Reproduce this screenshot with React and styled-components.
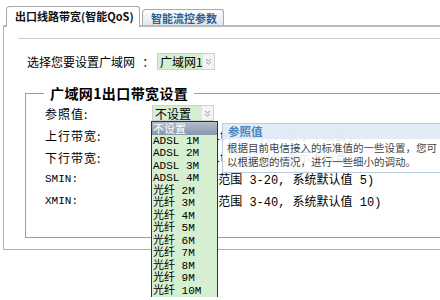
import React from "react";
import styled, { createGlobalStyle, css } from "styled-components";

const GlobalStyle = createGlobalStyle`
  body {
    margin: 0;
    background: #fff;
    overflow: hidden;
    font-family: "Liberation Mono", "Noto Sans CJK SC", monospace;
    font-size: 12px;
    color: #000;
  }
`;

const Page = styled.div`
  width: 480px;
  height: 300px;
  position: relative;
`;

const TabRow = styled.div`
  display: flex;
  align-items: flex-end;
  gap: 2px;
  height: 25px;
  padding-left: 6px;
  position: relative;
  z-index: 2;
`;

const Tab = styled.div`
  display: flex;
  align-items: center;
  box-sizing: border-box;
  border: 1px solid #a9a9a9;
  border-bottom: none;
  border-radius: 4px 3px 0 0;
  font-family: "Noto Sans CJK SC", sans-serif;
  font-weight: bold;
  font-size: 11px;
  white-space: nowrap;
  ${(p) =>
    p.$active
      ? css`
          width: 134px;
          height: 21px;
          margin-bottom: -2px;
          padding: 0 0 2px 8px;
          background: #fff;
          color: #111;
        `
      : css`
          width: 82px;
          height: 16px;
          padding-left: 8px;
          background: linear-gradient(#fbfcfd, #e3e8ee);
          color: #2f5f8f;
        `}
`;

const Panel = styled.div`
  margin-left: 3px;
  border-top: 2px solid #b9b9b9;
  border-left: 1px solid #b0b0b0;
  border-bottom: 1px solid #b0b0b0;
  padding-bottom: 11px;
`;

const Rule = styled.div`
  margin: 11px 0 0 14px;
  border-top: 1px solid #cfcfcf;
`;

const WanRow = styled.div`
  display: flex;
  align-items: center;
  height: 17px;
  margin-top: 14px;
  padding-left: 23px;
`;

const WanLabel = styled.span`
  width: 130px;
`;

const SelectBox = styled.div`
  display: flex;
  box-sizing: border-box;
  width: ${(p) => p.$w}px;
  height: ${(p) => p.$h}px;
  border: 1px solid #d0d0d0;
  background: #fff;
`;

const SelectText = styled.span`
  flex: 1;
  display: flex;
  align-items: center;
  padding-left: 2px;
  overflow: hidden;
  background: #d6efd0;
  font-family: "Noto Sans CJK SC", sans-serif;
  font-size: 12px;
  white-space: nowrap;
`;

const SelectArrow = styled.span`
  width: 11px;
  flex: none;
  display: flex;
  align-items: center;
  justify-content: center;
  background: #f4f4f4;
`;

const Fieldset = styled.fieldset`
  margin: 14px 0 0 21px;
  padding: 0 0 25px 19px;
  border: 1px solid #9e9e9e;
  border-right: none;
`;

const Legend = styled.legend`
  margin-left: -1px;
  padding: 0 6px;
  font-family: "Noto Sans CJK SC", sans-serif;
  font-weight: bold;
  font-size: 14px;
  line-height: 18px;
  letter-spacing: 0.4px;
`;

const FormRow = styled.div`
  display: flex;
  align-items: center;
  height: 22px;
  position: relative;
`;

const RowLabel = styled.span`
  width: 107px;
  font-family: "Noto Sans CJK SC", sans-serif;
  letter-spacing: 1px;
  ${(p) =>
    p.$latin &&
    css`
      font-family: "Liberation Mono", monospace;
      font-size: 11px;
      letter-spacing: 0;
    `}
`;

const Input = styled.span`
  box-sizing: border-box;
  width: ${(p) => p.$w}px;
  height: 16px;
  border: 1px solid #b5b5b5;
  margin-right: 4px;
`;

const Suffix = styled.span`
  white-space: nowrap;
`;

const SelectWrap = styled.div`
  position: relative;
`;

const DropList = styled.div`
  position: absolute;
  top: 16px;
  left: -1px;
  width: 67px;
  box-sizing: border-box;
  border: 1px solid #333;
  border-bottom: none;
  background: #d6efd0;
  z-index: 5;
`;

const DropItem = styled.div`
  height: 12.5px;
  line-height: 12.5px;
  padding-left: 1px;
  font-size: 11px;
  white-space: nowrap;
  ${(p) =>
    p.$selected &&
    css`
      background: linear-gradient(#b3bdcb, #8797ad);
      color: #fff;
      font-family: "Noto Sans CJK SC", sans-serif;
    `}
`;

const Tooltip = styled.div`
  position: absolute;
  top: 18px;
  left: 70px;
  width: 240px;
  border: 1px solid #b9cde0;
  background: rgba(255, 255, 255, 0.9);
  z-index: 4;
`;

const TipHead = styled.div`
  height: 15px;
  line-height: 15px;
  padding-left: 5px;
  background: rgba(221, 233, 246, 0.85);
  color: #4b84bf;
  font-family: "Noto Sans CJK SC", sans-serif;
  font-weight: bold;
  font-size: 11.5px;
`;

const TipBody = styled.div`
  padding: 2px 24px 3px 4px;
  font-family: "Noto Sans CJK SC", sans-serif;
  font-size: 10.5px;
  line-height: 14px;
  color: #444;
`;

const Arrow = () => (
  <svg width="7" height="7" viewBox="0 0 7 7">
    <path d="M1 1l2.5 2 2.5-2M1 4l2.5 2 2.5-2" fill="none" stroke="#9a9a9a" strokeWidth="1" />
  </svg>
);

const Select = ({ w, h, children }) => (
  <SelectBox $w={w} $h={h}>
    <SelectText>{children}</SelectText>
    <SelectArrow>
      <Arrow />
    </SelectArrow>
  </SelectBox>
);

const options = [
  "不设置",
  "ADSL 1M",
  "ADSL 2M",
  "ADSL 3M",
  "ADSL 4M",
  "光纤 2M",
  "光纤 3M",
  "光纤 4M",
  "光纤 5M",
  "光纤 6M",
  "光纤 7M",
  "光纤 8M",
  "光纤 9M",
  "光纤 10M",
];

export default function App() {
  return (
    <Page>
      <GlobalStyle />
      <TabRow>
        <Tab $active>出口线路带宽(智能QoS)</Tab>
        <Tab>智能流控参数</Tab>
      </TabRow>
      <Panel>
        <Rule />
        <WanRow>
          <WanLabel>选择您要设置广域网 ：</WanLabel>
          <Select w={58} h={17}>广域网1</Select>
        </WanRow>
        <Fieldset>
          <Legend>广域网1出口带宽设置</Legend>
          <FormRow>
            <RowLabel>参照值:</RowLabel>
            <SelectWrap>
              <Select w={62} h={16}>不设置</Select>
              <DropList>
                {options.map((o, i) => (
                  <DropItem key={o} $selected={i === 0}>
                    {o}
                  </DropItem>
                ))}
              </DropList>
              <Tooltip>
                <TipHead>参照值</TipHead>
                <TipBody>
                  根据目前电信接入的标准值的一些设置，您可以根据您的情况，进行一些细小的调动。
                </TipBody>
              </Tooltip>
            </SelectWrap>
          </FormRow>
          <FormRow>
            <RowLabel>上行带宽:</RowLabel>
            <Input $w={42} />
            <Suffix>Kbit(字节)(0 表示不设置)</Suffix>
          </FormRow>
          <FormRow>
            <RowLabel>下行带宽:</RowLabel>
            <Input $w={42} />
            <Suffix>Kbit(字节)(0 表示不设置)</Suffix>
          </FormRow>
          <FormRow>
            <RowLabel $latin>SMIN:</RowLabel>
            <Input $w={55} />
            <Suffix>(范围 3-20, 系统默认值 5)</Suffix>
          </FormRow>
          <FormRow>
            <RowLabel $latin>XMIN:</RowLabel>
            <Input $w={55} />
            <Suffix>(范围 3-40, 系统默认值 10)</Suffix>
          </FormRow>
        </Fieldset>
      </Panel>
    </Page>
  );
}
